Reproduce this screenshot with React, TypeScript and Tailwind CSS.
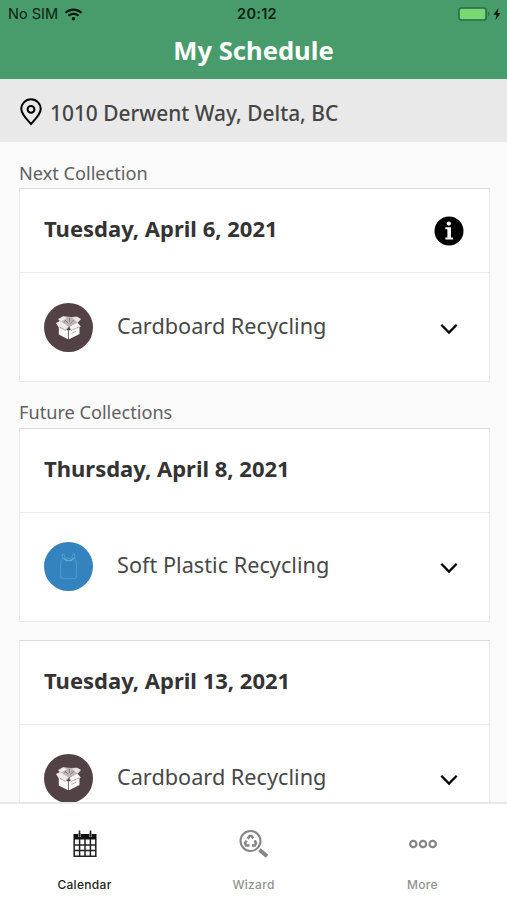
import { FaWifi } from "react-icons/fa";

type Kind = "cardboard" | "plastic";

const nextCollections = [
    { id: 1, date: "Tuesday, April 6, 2021", name: "Cardboard Recycling", kind: "cardboard" as Kind, info: true },
];

const futureCollections = [
    { id: 2, date: "Thursday, April 8, 2021", name: "Soft Plastic Recycling", kind: "plastic" as Kind, info: false },
    { id: 3, date: "Tuesday, April 13, 2021", name: "Cardboard Recycling", kind: "cardboard" as Kind, info: false },
];

function BoxIcon() {
    return (
        <svg width="49" height="49" viewBox="0 0 49 49" className="rounded-full bg-[#524145]">
            <path d="M14 16 L19 13 L27 14 L33 13.500 L37 16 L33.500 20 L25 23.500 L16 19 Z" fill="#bdb4b6" />
            <path d="M14.500 16.300 L19.500 13.500 L23 15 L17.500 18.500 Z" fill="#f0eded" />
            <path d="M28 14.500 L33 14 L36.800 16 L33.500 19.500 Z" fill="#e9e5e6" />
            <path d="M21 17 L24 20 M25.500 15 V19 M29.500 17 L26.500 20.500 M20 19 L22 17.500" stroke="#8d7e83" strokeWidth="1" />
            <path d="M14.800 23 L24 27.500 V36.300 L14.800 31.500 Z" fill="#faf9f9" />
            <path d="M25 27.500 L35.500 23 V31 L25 36.300 Z" fill="#fff" />
            <path d="M12 20 L16 18 L25 23.500 L21.500 28 L15 24.800 Z" fill="#eeebeb" />
            <path d="M25.500 23.500 L33.500 19.500 L36.800 23.500 L27 28 Z" fill="#f7f5f5" />
            <path d="M15.500 24 L21.500 27.300 L24.500 23.800 L27.300 27.300 L35.500 23.700" stroke="#9a8d91" strokeWidth="0.7" fill="none" />
            <path d="M24.500 27 V36" stroke="#82747a" strokeWidth="0.900" />
            <path d="M27.500 30.300 L32 28.300" stroke="#a79b9e" strokeWidth="0.900" />
        </svg>
    );
}

function BagIcon() {
    return (
        <svg width="49" height="49" viewBox="0 0 49 49" className="rounded-full bg-[#3482be]">
            <path
                d="M18.500 12 H20 C20.500 18 28.500 18 29 12 H30.500 L31 17 C32.200 18.500 32.500 20 32.500 22 V34 C32.500 36 31.500 36.500 30 36.500 H19 C17.500 36.500 16.700 36 16.700 34 V22 C16.700 20 17 18.500 18.200 17 Z"
                fill="none"
                stroke="#4c98cd"
                strokeWidth="1.200"
            />
            <path d="M19.500 16 C22 19.500 27.500 19.500 30 16" fill="none" stroke="#63acd4" strokeWidth="1.400" />
        </svg>
    );
}

function InfoIcon() {
    return (
        <svg width="30" height="30" viewBox="0 0 30 30">
            <circle cx="15" cy="15" r="14.500" fill="#000" />
            <circle cx="14.800" cy="7.600" r="2.100" fill="#fff" />
            <path d="M11.300 11.300 H17 V21.500 H19 V23.500 H11.300 V21.500 H13.400 V13.300 H11.300 Z" fill="#fff" />
        </svg>
    );
}

function CollectionCard(props: any) {
    return (
        <div className="border border-[#e8e8e8] border-t-[#dadada] bg-white">
            <div className="flex h-[84px] items-center justify-between border-b border-[#ebebeb] pr-[25px] pl-6">
                <h2 className="pb-[4px] text-[22px] font-bold text-[#333]">{props.date}</h2>
                {props.info && <InfoIcon />}
            </div>
            <div className="flex h-[108px] items-center pr-[31px] pl-6">
                {props.kind === "cardboard" ? <BoxIcon /> : <BagIcon />}
                <span className="ml-6 flex-1 pb-[2px] text-[21.7px] text-[#484848]">{props.name}</span>
                <svg width="18" height="12" viewBox="0 0 18 12" className="mt-[3px]">
                    <path d="M1.300 1.700 L9 9.600 L16.700 1.700" fill="none" stroke="#000" strokeWidth="2.300" />
                </svg>
            </div>
        </div>
    );
}

function CalendarIcon() {
    return (
        <svg width="26" height="28" viewBox="0 0 26 28" fill="none">
            <path d="M1.500 4 H24.500 V9.500 H1.500 Z" fill="#111" />
            <path d="M2.200 9 V26.200 H23.800 V9 M2 15 H24 M2 20.500 H24 M7.600 9 V26 M13 9 V26 M18.400 9 V26" stroke="#222" strokeWidth="1.500" />
            <path d="M7.500 3.500 V7 M18.500 3.500 V7" stroke="#999" strokeWidth="3" />
            <path d="M7.500 0.500 V6.500 M18.500 0.500 V6.500" stroke="#222" strokeWidth="1.600" />
        </svg>
    );
}

function WizardIcon() {
    return (
        <svg width="30" height="30" viewBox="0 0 30 30" fill="none" stroke="#858585">
            <circle cx="11.500" cy="12" r="10" strokeWidth="2" />
            <path d="M20.500 20.800 L28 27.300" strokeWidth="3.800" />
            <path d="M8.700 9.800 L10.600 6.900 H12.500 L14.300 9.500" strokeWidth="2.500" />
            <path d="M15.700 11.300 L17 14.100 L15.800 16.500 H13" strokeWidth="2.500" />
            <path d="M10.500 16.500 H7.200 L6 14.300 L7.500 11.700" strokeWidth="2.500" />
        </svg>
    );
}

function MoreIcon() {
    return (
        <svg width="30" height="12" viewBox="0 0 30 12" fill="none" stroke="#858585" strokeWidth="2.200">
            <circle cx="5.300" cy="6" r="3.200" />
            <circle cx="15" cy="6" r="3.200" />
            <circle cx="24.700" cy="6" r="3.200" />
        </svg>
    );
}

const tabs = [
    { id: "calendar", label: "Calendar", icon: <CalendarIcon />, color: "text-[#222]" },
    { id: "wizard", label: "Wizard", icon: <WizardIcon />, color: "text-[#929292]" },
    { id: "more", label: "More", icon: <MoreIcon />, color: "text-[#929292]" },
];

export default function App() {
    return (
        <div className="flex h-[900px] w-[507px] flex-col overflow-hidden bg-[#fafafa] font-['Noto_Sans',sans-serif]">
            <header className="h-[79px] bg-[#489b6a]">
                <div className="grid h-7 grid-cols-[1fr_auto_1fr] items-center pr-[6px] pl-2 font-['Inter',sans-serif] text-[14.5px] text-[#0c2115]">
                    <div className="flex items-center gap-[7px]">
                        <span>No SIM</span>
                        <FaWifi size={17} color="#06150c" />
                    </div>
                    <span className="ml-[5px] font-semibold tracking-[0.3px]">20:12</span>
                    <div className="flex items-center justify-end">
                        <svg width="43" height="14" viewBox="0 0 43 14">
                            <rect x="0.800" y="0.800" width="27.500" height="12.400" rx="2.800" fill="none" stroke="#296d41" strokeWidth="1.300" />
                            <rect x="2" y="2" width="25" height="10" rx="1.500" fill="#78d873" />
                            <path d="M30 5 C31.800 5.500 31.800 8.500 30 9 Z" fill="#296d41" />
                            <path d="M40.500 1 L35.500 7.800 H38.500 L37.500 13 L42.500 6 H39.500 Z" fill="#06150c" />
                        </svg>
                    </div>
                </div>
                <h1 className="text-center text-[25.6px] leading-[46px] font-bold text-white">My Schedule</h1>
            </header>

            <div className="flex h-[63px] items-center gap-2 bg-[#e9e9e9] pl-5">
                <svg width="22" height="28" viewBox="0 0 22 28" fill="none" stroke="#000" strokeWidth="2" className="mt-[3px]">
                    <path d="M11 26 C8 22.500 1.300 16.500 1.300 11 A9.700 9.700 0 0 1 20.700 11 C20.700 16.500 14 22.500 11 26 Z" />
                    <circle cx="11" cy="11.300" r="3.400" />
                </svg>
                <span className="pt-[7px] text-[20.9px] font-medium text-[#444]">1010 Derwent Way, Delta, BC</span>
            </div>

            <main className="flex-1 overflow-hidden pr-[17px] pl-[19px]">
                <h3 className="h-[46px] pt-[17px] text-[18.15px] leading-7 text-[#606060]">Next Collection</h3>
                {nextCollections.map((item) => (
                    <CollectionCard key={item.id} {...item} />
                ))}
                <h3 className="h-[45.5px] pt-[16px] text-[18.15px] leading-7 text-[#606060]">Future Collections</h3>
                <div className="grid gap-[18px]">
                    {futureCollections.map((item) => (
                        <CollectionCard key={item.id} {...item} />
                    ))}
                </div>
            </main>

            <nav className="grid h-[98px] grid-cols-3 border-t-2 border-[#e8e8e8] bg-white font-['Inter',sans-serif]">
                {tabs.map((tab) => (
                    <div key={tab.id} className={`flex flex-col items-center ${tab.color}`}>
                        <div className="flex h-[79px] items-center">{tab.icon}</div>
                        <span className="-mt-[6px] text-[12px] leading-4 font-medium tracking-[0.3px]">{tab.label}</span>
                    </div>
                ))}
            </nav>
        </div>
    );
}
